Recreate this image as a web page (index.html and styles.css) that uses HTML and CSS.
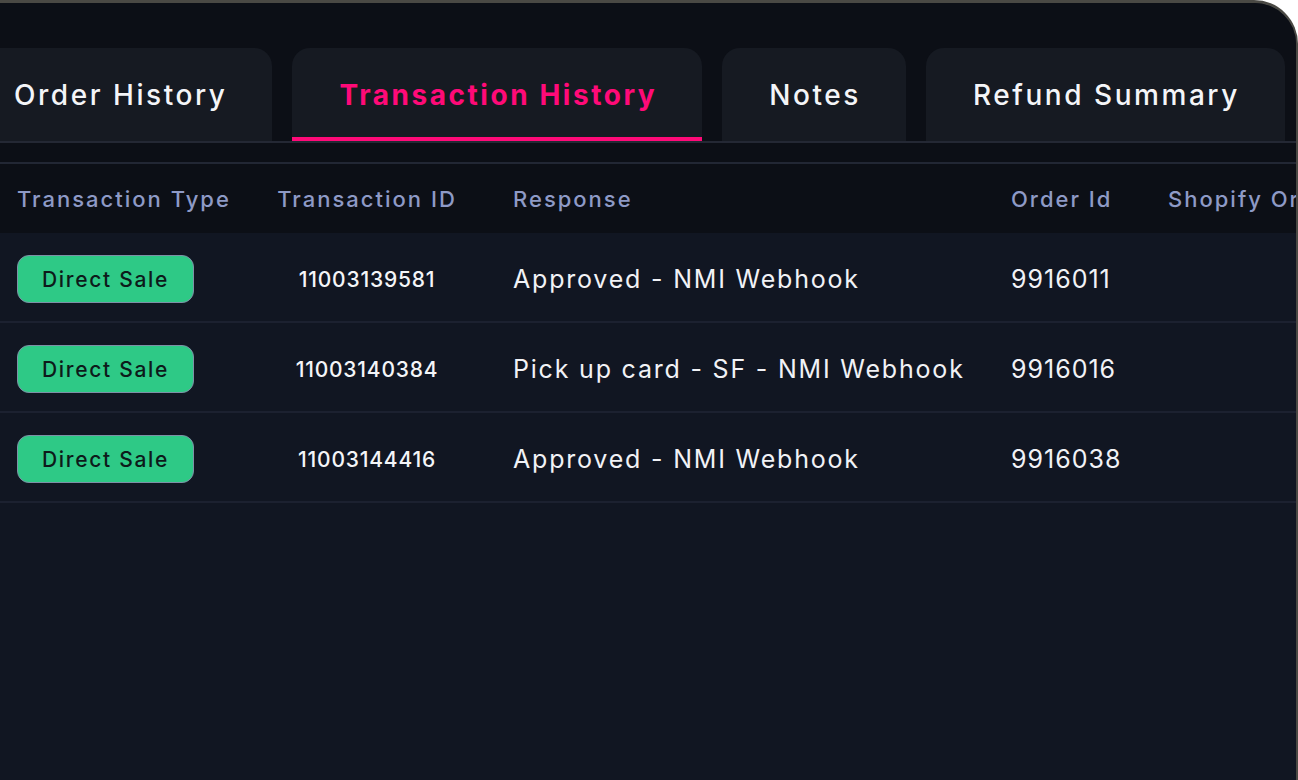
FILE: index.html
```html
<!DOCTYPE html>
<html>
<head>
<meta charset="utf-8">
<link rel="stylesheet" href="styles.css">
</head>
<body>
<div class="frame">
  <div class="tabs">
    <div class="tab">Order History</div>
    <div class="tab active">Transaction History</div>
    <div class="tab">Notes</div>
    <div class="tab">Refund Summary</div>
  </div>
  <div class="gap-band"></div>
  <div class="table">
    <div class="row head">
      <div class="c1">Transaction Type</div>
      <div class="c2">Transaction ID</div>
      <div class="c3">Response</div>
      <div class="c4">Order Id</div>
      <div class="c5">Shopify Order</div>
    </div>
    <div class="row">
      <div class="c1"><span class="badge">Direct Sale</span></div>
      <div class="c2 tid">11003139581</div>
      <div class="c3 resp">Approved - NMI Webhook</div>
      <div class="c4 oid">9916011</div>
      <div class="c5"></div>
    </div>
    <div class="row">
      <div class="c1"><span class="badge">Direct Sale</span></div>
      <div class="c2 tid">11003140384</div>
      <div class="c3 resp">Pick up card - SF - NMI Webhook</div>
      <div class="c4 oid">9916016</div>
      <div class="c5"></div>
    </div>
    <div class="row">
      <div class="c1"><span class="badge">Direct Sale</span></div>
      <div class="c2 tid">11003144416</div>
      <div class="c3 resp">Approved - NMI Webhook</div>
      <div class="c4 oid">9916038</div>
      <div class="c5"></div>
    </div>
  </div>
</div>
</body>
</html>
```

FILE: styles.css
```css
* { box-sizing: border-box; }
html, body { margin: 0; padding: 0; background: #ffffff; }
body { width: 1298px; height: 780px; overflow: hidden; font-family: Inter, "Noto Sans", sans-serif; }

.frame {
  width: 1298px;
  height: 780px;
  background: #111622;
  border-top: 3px solid #4a4944;
  border-right: 2px solid #4a4944;
  border-top-right-radius: 44px;
  overflow: hidden;
  display: flex;
  flex-direction: column;
}

.tabs {
  display: flex;
  gap: 20px;
  margin-left: -33px;
  padding-top: 45px;
  background: #0c0f16;
  border-bottom: 2px solid #242834;
  white-space: nowrap;
}
.tab {
  flex: none;
  height: 93px;
  padding: 0 45px 0 47px;
  display: flex;
  align-items: center;
  background: #161a22;
  border-top-left-radius: 18px;
  border-top-right-radius: 18px;
  color: #f4f5f8;
  font-size: 28px;
  font-weight: 500;
  letter-spacing: 2.55px;
}
.tab.active {
  color: #ff0a78;
  font-weight: 700;
  letter-spacing: 2.55px;
  border-bottom: 4px solid #ff0a78;
  padding-top: 4px;
}

.gap-band {
  height: 21px;
  background: #0c0f16;
  border-bottom: 2px solid #222734;
}

.table { display: flex; flex-direction: column; }
.row {
  display: grid;
  grid-template-columns: 257px 220px 514px 157px 200px;
  height: 90px;
  padding-top: 4px;
  align-items: center;
  border-bottom: 2px solid #1c2130;
  white-space: nowrap;
}
.row.head {
  height: 69px;
  padding-top: 0;
  background: #0c0f16;
  border-bottom: none;
  color: #8e9ac6;
  font-size: 22px;
  font-weight: 500;
  letter-spacing: 2px;
}
.c1 { padding-left: 17px; }
.c2 { text-align: center; }
.c3 { padding-left: 36px; }
.c4 { padding-left: 20px; }
.c5 { padding-left: 20px; overflow: hidden; }

.badge {
  display: inline-flex;
  align-items: center;
  justify-content: center;
  width: 177px;
  height: 48px;
  background: #2ec986;
  border: 1.5px solid #7d91a6;
  border-radius: 12px;
  color: #0d1a1a;
  font-size: 21px;
  font-weight: 500;
  letter-spacing: 1.7px;
}
.tid {
  color: #f4f5f8;
  font-size: 21px;
  font-weight: 500;
  letter-spacing: 0.8px;
}
.resp, .oid {
  color: #f1f2f6;
  font-size: 25px;
  font-weight: 400;
}
.resp { letter-spacing: 1.8px; }
.oid { letter-spacing: 1px; }
```
